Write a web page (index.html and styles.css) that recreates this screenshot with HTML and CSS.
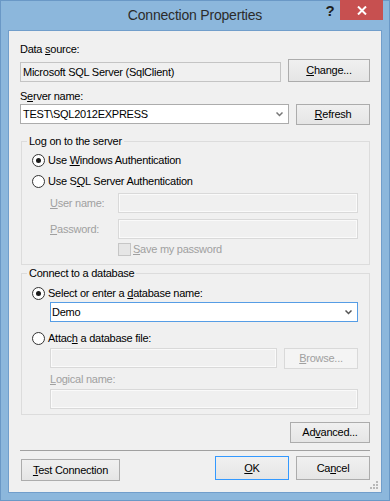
FILE: index.html
```html
<!DOCTYPE html>
<html>
<head>
<meta charset="utf-8">
<link rel="stylesheet" href="styles.css">
</head>
<body>
<div class="window">
  <div class="titlebar">
    <div></div>
    <div class="title">Connection Properties</div>
    <div class="caption-btns">
      <div class="help">?</div>
      <div class="close"><svg width="10" height="9" viewBox="0 0 10 9"><path d="M1 0.5 L9 8.5 M9 0.5 L1 8.5" stroke="#fff" stroke-width="2"/></svg></div>
    </div>
  </div>
  <div class="client">
    <div class="label">Data <u>s</u>ource:</div>
    <div class="row row-ds">
      <div class="tb readonly tb-ds">Microsoft SQL Server (SqlClient)</div>
      <button class="btn btn-change"><u>C</u>hange...</button>
    </div>
    <div class="label label-server">S<u>e</u>rver name:</div>
    <div class="row row-server">
      <div class="tb combo tb-server"><span>TEST\SQL2012EXPRESS</span><svg class="chev" width="7" height="5" viewBox="0 0 7 5"><path d="M0.5 0.5 L3.5 3.5 L6.5 0.5" stroke="#777" stroke-width="1.5" fill="none"/></svg></div>
      <button class="btn btn-refresh"><u>R</u>efresh</button>
    </div>

    <fieldset class="group group-logon">
      <legend>Log on to the server</legend>
      <div class="group-body">
        <div class="radio-row r1"><span class="radio checked"></span><span>Use <u>W</u>indows Authentication</span></div>
        <div class="radio-row r2"><span class="radio"></span><span>Use S<u>Q</u>L Server Authentication</span></div>
        <div class="field-row f-user"><span class="flabel disabled"><u>U</u>ser name:</span><div class="tb disabled tb-cred"></div></div>
        <div class="field-row f-pass"><span class="flabel disabled"><u>P</u>assword:</span><div class="tb disabled tb-cred"></div></div>
        <div class="check-row"><span class="check"></span><span class="disabled"><u>S</u>ave my password</span></div>
      </div>
    </fieldset>

    <fieldset class="group group-db">
      <legend>Connect to a database</legend>
      <div class="group-body">
        <div class="radio-row d1"><span class="radio checked"></span><span>Select or enter a <u>d</u>atabase name:</span></div>
        <div class="tb combo focus tb-db"><span>Demo</span><svg class="chev" width="7" height="5" viewBox="0 0 7 5"><path d="M0.5 0.5 L3.5 3.5 L6.5 0.5" stroke="#555" stroke-width="1.5" fill="none"/></svg></div>
        <div class="radio-row d2"><span class="radio"></span><span>Attac<u>h</u> a database file:</span></div>
        <div class="row row-attach">
          <div class="tb disabled tb-attach"></div>
          <button class="btn btn-disabled btn-browse"><u>B</u>rowse...</button>
        </div>
        <div class="label disabled label-logical"><u>L</u>ogical name:</div>
        <div class="tb disabled tb-logical"></div>
      </div>
    </fieldset>

    <div class="row row-adv">
      <button class="btn btn-adv">Ad<u>v</u>anced...</button>
    </div>
    <div class="separator"></div>
    <div class="row row-bottom">
      <button class="btn btn-test"><u>T</u>est Connection</button>
      <div class="spacer"></div>
      <button class="btn btn-ok"><u>O</u>K</button>
      <button class="btn btn-cancel">Ca<u>n</u>cel</button>
    </div>
    <svg class="grip" width="9" height="9" viewBox="0 0 9 9">
      <rect x="6" y="0" width="2" height="2" fill="#b8b8b8"/>
      <rect x="3" y="3" width="2" height="2" fill="#b8b8b8"/>
      <rect x="6" y="3" width="2" height="2" fill="#b8b8b8"/>
      <rect x="0" y="6" width="2" height="2" fill="#b8b8b8"/>
      <rect x="3" y="6" width="2" height="2" fill="#b8b8b8"/>
      <rect x="6" y="6" width="2" height="2" fill="#b8b8b8"/>
    </svg>
  </div>
</div>
</body>
</html>
```

FILE: styles.css
```css
* { box-sizing: border-box; }
html, body { margin: 0; padding: 0; }
body {
  width: 390px;
  height: 501px;
  font-family: "Liberation Sans", Arial, sans-serif;
  font-size: 11px;
  letter-spacing: -0.25px;
  color: #000;
  overflow: hidden;
}
u { text-underline-offset: 1px; }

.window {
  width: 390px;
  height: 501px;
  background: #8cb7dc;
  border: 1px solid #6a98c6;
  display: flex;
  flex-direction: column;
}

.titlebar {
  height: 29px;
  display: grid;
  grid-template-columns: 1fr auto 1fr;
  align-items: start;
}
.title {
  font-size: 14px;
  letter-spacing: -0.2px;
  color: #2b2b2b;
  line-height: 16px;
  padding-top: 6px;
}
.caption-btns {
  display: flex;
  justify-content: flex-end;
  align-items: flex-start;
  margin-top: -1px;
  margin-right: 6px;
}
.help {
  font-weight: bold;
  font-size: 15px;
  color: #1e1e1e;
  line-height: 16px;
  padding-top: 3px;
  width: 14px;
  text-align: center;
  margin-right: 3px;
}
.close {
  width: 43px;
  height: 20px;
  background: #c75050;
  display: flex;
  align-items: center;
  justify-content: center;
}

.client {
  position: relative;
  margin: 0 7px;
  height: 463px;
  background: #f0f0f0;
  border: 1px solid #719ecb;
  padding: 12px 11px 0 11px;
}

.label { line-height: 13px; height: 13px; }
.label-server { margin-top: 8px; }

.row { display: flex; }
.row-ds { margin-top: 3px; align-items: flex-end; gap: 7px; }
.row-server { margin-top: 1px; align-items: flex-start; gap: 7px; }

.tb {
  height: 20px;
  border: 1px solid #acacac;
  background: #fff;
  line-height: 18px;
  padding: 0 2px;
  white-space: nowrap;
}
.readonly { background: #f0f0f0; border-color: #c4c4c4; }
.disabled.tb { background: #f0f0f0; border-color: #d9d9d9; box-shadow: inset 0 0 0 1px #fafafa; }
.combo { display: flex; align-items: center; justify-content: space-between; padding-right: 5px; }
.focus { border-color: #569de5; }
.tb-ds { width: 261px; }
.tb-server { width: 269px; }

.btn {
  font: inherit;
  letter-spacing: inherit;
  color: #000;
  border: 1px solid #acacac;
  background: linear-gradient(#f0f0f0, #e5e5e5);
  padding: 0;
  text-align: center;
  line-height: 13px;
}
.btn-change { width: 82px; height: 23px; }
.btn-refresh { width: 74px; height: 21px; }
.btn-disabled { color: #a0a0a0; border-color: #d9d9d9; background: #f4f4f4; }

.disabled { color: #a0a0a0; }

.group {
  margin: 0 0 0 1px;
  width: 349px;
  padding: 0;
  border: 1px solid #dcdcdc;
  min-width: 0;
}
.group legend {
  margin-left: 5px;
  padding: 0 2px;
  line-height: 13px;
  height: 13px;
}
.group-logon { margin-top: 10px; }
.group-logon .group-body { padding: 0 11px 8px 10px; }
.group-db { margin-top: 2px; }
.group-db .group-body { padding: 0 11px 5px 10px; }

.radio-row { display: flex; align-items: center; height: 13px; line-height: 13px; gap: 3px; }
.radio {
  width: 13px;
  height: 13px;
  border-radius: 50%;
  border: 1px solid #333;
  background: #fff;
  position: relative;
  flex: none;
}
.radio.checked::after {
  content: "";
  position: absolute;
  left: 3px;
  top: 3px;
  width: 5px;
  height: 5px;
  border-radius: 50%;
  background: #1a1a1a;
}
.r1 { margin-top: 6px; }
.r2 { margin-top: 8px; }

.field-row { display: flex; align-items: center; padding-left: 18px; }
.flabel { width: 68px; line-height: 13px; }
.f-user { margin-top: 5px; }
.f-pass { margin-top: 6px; }
.tb-cred { width: 240px; }

.check-row { display: flex; align-items: center; margin-top: 4px; padding-left: 86px; height: 13px; line-height: 13px; gap: 2px; }
.check {
  width: 13px;
  height: 13px;
  border: 1px solid #c6c6c6;
  background: #e6e6e6;
  flex: none;
}

.d1 { margin-top: 7px; }
.tb-db { margin-top: 2px; margin-left: 18px; width: 308px; padding-left: 1px; }
.d2 { margin-top: 10px; }
.row-attach { margin-top: 3px; margin-left: 18px; gap: 7px; align-items: flex-start; }
.tb-attach { width: 227px; }
.btn-browse { width: 74px; height: 21px; }
.label-logical { margin-top: 4px; margin-left: 18px; }
.tb-logical { margin-top: 3px; margin-left: 18px; width: 308px; }

.row-adv { justify-content: flex-end; margin-top: 7px; }
.btn-adv { width: 80px; height: 21px; }
.separator { margin-top: 7px; height: 1px; background: #a0a0a0; }
.row-bottom { margin-top: 5px; align-items: flex-start; gap: 7px; }
.spacer { flex: 1; }
.btn-test { width: 99px; height: 22px; margin-top: 3px; margin-left: 1px; }
.btn-ok { width: 74px; height: 24px; border-color: #3399ff; }
.btn-cancel { width: 74px; height: 24px; }

.grip { position: absolute; right: 2px; bottom: 2px; }
```
